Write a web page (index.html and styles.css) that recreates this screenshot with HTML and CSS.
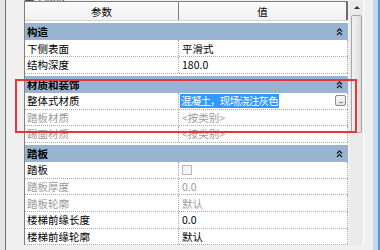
FILE: index.html
```html
<!DOCTYPE html>
<html lang="zh-CN">
<head>
    <meta charset="UTF-8">
    <title>类型参数</title>
    <link rel="stylesheet" href="styles.css">
</head>
<body>
    <div class="window">
        <div class="edge-left"></div>

        <div class="panel">
            <div class="caption"><span>类型参数</span></div>

            <div class="sheet">
                <div class="props">
                    <div class="row head">
                        <div class="cell">参数</div>
                        <div class="cell">值</div>
                    </div>

                    <!-- 构造 -->
                    <div class="row group">
                        <div class="cell">构造</div>
                        <svg class="fold" width="7" height="9" viewBox="0 0 7 9"><path d="M1 4.5 3.5 2 6 4.5M1 8 3.5 5.5 6 8" fill="none" stroke="#222" stroke-width="1.3"/></svg>
                    </div>
                    <div class="row">
                        <div class="cell">下侧表面</div>
                        <div class="cell value">平滑式</div>
                    </div>
                    <div class="row">
                        <div class="cell">结构深度</div>
                        <div class="cell value">180.0</div>
                    </div>

                    <!-- 材质和装饰 -->
                    <div class="row group">
                        <div class="cell">材质和装饰</div>
                        <svg class="fold" width="7" height="9" viewBox="0 0 7 9"><path d="M1 4.5 3.5 2 6 4.5M1 8 3.5 5.5 6 8" fill="none" stroke="#222" stroke-width="1.3"/></svg>
                    </div>
                    <div class="row">
                        <div class="cell">整体式材质</div>
                        <div class="cell value editing">
                            <span class="selected">混凝土，现场浇注灰色</span>
                            <span class="browse">...</span>
                        </div>
                    </div>
                    <div class="row off">
                        <div class="cell">踏板材质</div>
                        <div class="cell value">&lt;按类别&gt;</div>
                    </div>
                    <div class="row off">
                        <div class="cell">踢面材质</div>
                        <div class="cell value">&lt;按类别&gt;</div>
                    </div>

                    <!-- 踏板 -->
                    <div class="row group">
                        <div class="cell">踏板</div>
                        <svg class="fold" width="7" height="9" viewBox="0 0 7 9"><path d="M1 4.5 3.5 2 6 4.5M1 8 3.5 5.5 6 8" fill="none" stroke="#222" stroke-width="1.3"/></svg>
                    </div>
                    <div class="row">
                        <div class="cell">踏板</div>
                        <div class="cell value"><span class="checkbox"></span></div>
                    </div>
                    <div class="row off">
                        <div class="cell">踏板厚度</div>
                        <div class="cell value">0.0</div>
                    </div>
                    <div class="row off">
                        <div class="cell">踏板轮廓</div>
                        <div class="cell value">默认</div>
                    </div>
                    <div class="row">
                        <div class="cell">楼梯前缘长度</div>
                        <div class="cell value">0.0</div>
                    </div>
                    <div class="row">
                        <div class="cell">楼梯前缘轮廓</div>
                        <div class="cell value">默认</div>
                    </div>
                </div>

                <div class="scrollbar">
                    <div class="arrow"></div>
                    <div class="thumb"></div>
                </div>
            </div>

            <!-- annotation frame -->
            <div class="mark"></div>
        </div>

        <div class="edge-right"></div>
    </div>
</body>
</html>
```

FILE: styles.css
```css
:root {
    --bg: #f0f0f0;
    --group: #99b4d1;
    --line: #a8a8a8;
    --frame: #808080;
    --muted: #9a9a9a;
    --select: #3399ff;
}

body {
    margin: 0;
    background: var(--bg);
    font-family: "Noto Sans CJK SC", "Liberation Sans", sans-serif;
    font-size: 10.5px;
    color: #000;
}

.window {
    display: flex;
    height: 250px;
    overflow: hidden;
}

.edge-left {
    width: 5px;
    background: #e6e6e6;
    border-right: 1px solid #66778a;
}

.edge-right {
    width: 5px;
    background: #c4d9ee;
    border-right: 2px solid #4a9be0;
}

.panel {
    flex: 1;
    padding-left: 18px;
    position: relative;
}

.caption {
    height: 9px;
}

.caption span {
    display: block;
    margin-top: -8px;
    line-height: 14px;
    color: #333;
}

.sheet {
    display: flex;
    gap: 2px;
}

.props {
    width: 324px;
    box-sizing: border-box;
    border-left: 1px solid var(--frame);
    background: #fff;
}

.row {
    display: grid;
    grid-template-columns: 154px 169px;
    height: 16.6px;
    box-sizing: border-box;
    border-bottom: 1px dotted var(--line);
    align-items: center;
}

.cell {
    padding-left: 2px;
    white-space: nowrap;
    overflow: hidden;
}

.row .cell:first-child {
    align-self: stretch;
    display: flex;
    align-items: center;
    border-right: 1px dotted var(--line);
}

.row .value {
    padding-left: 3px;
}

.row.off {
    color: var(--muted);
}

/* header */
.row.head {
    height: 20px;
    background: linear-gradient(#fbfbfb, #f1f1f1);
    border-top: 1px solid var(--frame);
    border-bottom: 1px solid #d5d5d5;
}

.row.head .cell {
    align-self: stretch;
    display: flex;
    align-items: center;
    justify-content: center;
    padding: 0;
}

.row.head .cell:first-child {
    border-right: 1px solid var(--frame);
}

.row.head .cell:last-child {
    border-right: 2px solid #6e6e6e;
}

/* group rows */
.row.group {
    display: flex;
    justify-content: space-between;
    height: 19.4px;
    background: var(--group);
    border-top: 2px solid #fff;
    border-bottom: none;
    font-weight: bold;
}

.row.group .cell:first-child {
    border-right: none;
    padding-left: 2px;
}

.fold {
    margin-right: 5px;
}

.row:not(.head):not(.group) .value {
    border-right: 1px dotted var(--line);
    align-self: stretch;
    display: flex;
    align-items: center;
}

.editing {
    justify-content: space-between;
    padding-left: 1px !important;
}

.selected {
    background: var(--select);
    color: #fff;
    padding: 0 1px;
    line-height: 14px;
    letter-spacing: -0.8px;
}

.browse {
    width: 9px;
    height: 9px;
    margin-right: 1px;
    border: 1px solid #8c8c8c;
    border-radius: 2px;
    background: linear-gradient(#fafafa, #e2e2e2);
    font-size: 7px;
    line-height: 8px;
    text-align: center;
    color: #333;
    letter-spacing: -1px;
}

.checkbox {
    width: 10px;
    height: 10px;
    box-sizing: border-box;
    border: 1px solid #b8b8b8;
    background: #f4f4f4;
}

/* scrollbar */
.scrollbar {
    width: 13px;
    border-right: 1px solid #fff;
    background: #eaeaea;
    display: flex;
    flex-direction: column;
    align-items: center;
}

.arrow {
    margin-top: 5px;
    width: 0;
    height: 0;
    border-left: 3px solid transparent;
    border-right: 3px solid transparent;
    border-bottom: 3px solid #333;
}

.thumb {
    margin-top: 6px;
    width: 11px;
    height: 118px;
    box-sizing: border-box;
    border: 1px solid #a6a6a6;
    border-radius: 2px;
    background: linear-gradient(90deg, #f2f2f2, #dcdcdc);
}

.mark {
    position: absolute;
    left: 9px;
    top: 79px;
    width: 342px;
    height: 54px;
    box-sizing: border-box;
    border: 2px solid #e8353a;
}
```
